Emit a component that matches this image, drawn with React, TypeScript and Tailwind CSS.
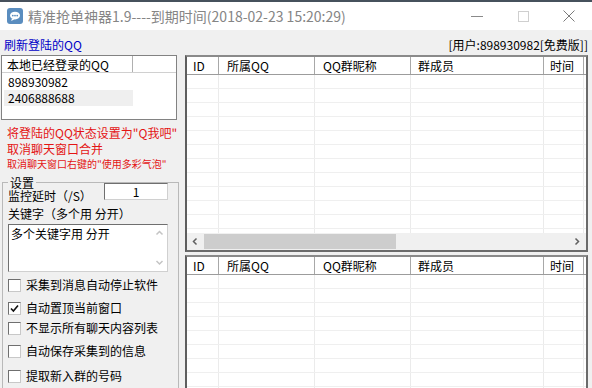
const cols = [
  { label: 'ID', w: 'w-[32px]', pl: 'pl-[6px]' },
  { label: '所属QQ', w: 'w-[96px]', pl: 'pl-[8px]' },
  { label: 'QQ群昵称', w: 'w-[96px]', pl: 'pl-[8px]' },
  { label: '群成员', w: 'w-[133px]', pl: 'pl-[7px]' },
  { label: '时间', w: 'w-[40px]', pl: 'pl-[6px]' },
];

function AppIcon() {
  return (
    <svg width="16" height="16" viewBox="0 0 16 16">
      <rect x="0" y="0" width="16" height="16" rx="3" fill="#5a8dbf" />
      <ellipse cx="8" cy="7.6" rx="5" ry="3.9" fill="#fff" />
      <path d="M5 10.5 L4.2 13 L7.5 11.2 Z" fill="#fff" />
      <circle cx="5.8" cy="7.6" r="0.9" fill="#5a8dbf" />
      <circle cx="8" cy="7.6" r="0.9" fill="#5a8dbf" />
      <circle cx="10.2" cy="7.6" r="0.9" fill="#5a8dbf" />
    </svg>
  );
}

function WindowControls() {
  return (
    <div className="ml-auto flex items-center h-full">
      <div className="w-[46px] flex justify-center">
        <svg width="12" height="12" viewBox="0 0 12 12">
          <line x1="0" y1="6.5" x2="12" y2="6.5" stroke="#8a8a8a" strokeWidth="1" />
        </svg>
      </div>
      <div className="w-[46px] flex justify-center">
        <svg width="11" height="11" viewBox="0 0 11 11">
          <rect x="0.5" y="0.5" width="10" height="10" fill="none" stroke="#cfcfcf" strokeWidth="1" />
        </svg>
      </div>
      <div className="w-[46px] flex justify-center">
        <svg width="12" height="12" viewBox="0 0 12 12">
          <path d="M0.5 0.5 L11.5 11.5 M11.5 0.5 L0.5 11.5" stroke="#7a7a7a" strokeWidth="1" />
        </svg>
      </div>
    </div>
  );
}

function Checkbox({ checked, label, mt }: { checked?: boolean; label: string; mt: string }) {
  return (
    <div className={`flex items-center h-[16px] ${mt}`}>
      <div className="w-[13px] h-[13px] bg-white border border-[#6f6f6f] border-r-[#c8c8c8] border-b-[#c8c8c8] flex items-center justify-center">
        {checked && (
          <svg width="9" height="9" viewBox="0 0 9 9">
            <path d="M1 4.5 L3.4 7 L8 1.5" fill="none" stroke="#111" strokeWidth="1.6" />
          </svg>
        )}
      </div>
      <span className="ml-[5px] leading-[16px]">{label}</span>
    </div>
  );
}

function Chevron({ dir, color = '#606060' }: { dir: 'l' | 'r' | 'u' | 'd'; color?: string }) {
  const d = {
    l: 'M5.5 1.5 L2.5 4.5 L5.5 7.5',
    r: 'M2.5 1.5 L5.5 4.5 L2.5 7.5',
    u: 'M1.5 5.5 L4.5 2.5 L7.5 5.5',
    d: 'M1.5 3 L4.5 6 L7.5 3',
  }[dir];
  return (
    <svg width="9" height="9" viewBox="0 0 9 9">
      <path d={d} fill="none" stroke={color} strokeWidth="1.5" />
    </svg>
  );
}

function GridTable({ rows, scroll, height }: { rows: number; scroll?: boolean; height: string }) {
  return (
    <div className={`w-[403px] ${height} shrink-0 border-2 border-[#6b6b6b] border-t-[#8a8a8a] border-l-[#5e5e5e] bg-white flex flex-col overflow-hidden`}>
      {/* header */}
      <div className="flex h-[18px] shrink-0 border-b border-[#9c9c9c]">
        {cols.map((c) => (
          <div key={c.label} className={`${c.w} ${c.pl} h-full border-r border-[#a8a8a8] leading-[17px] whitespace-nowrap`}>
            {c.label}
          </div>
        ))}
      </div>
      {/* body */}
      <div className="flex-1 overflow-hidden">
        {[...Array(rows)].map((_, i) => (
          <div key={i} className="flex h-[14px] border-b border-[#efefef]">
            {cols.map((c) => (
              <div key={c.label} className={`${c.w} h-full border-r border-[#ebebeb]`} />
            ))}
          </div>
        ))}
      </div>
      {scroll && (
        <div className="h-[17px] shrink-0 bg-[#f0f0f0] flex items-center">
          <div className="w-[17px] flex justify-center">
            <Chevron dir="l" />
          </div>
          <div className="flex-1 h-full flex items-center">
            <div className="w-[192px] h-[15px] bg-[#cdcdcd]" />
          </div>
          <div className="w-[17px] flex justify-center">
            <Chevron dir="r" />
          </div>
        </div>
      )}
    </div>
  );
}

export default function App() {
  return (
    <div className="w-[592px] h-[388px] overflow-hidden bg-[#f0f0f0] text-[12px] text-black font-['Noto_Sans_CJK_SC',sans-serif] flex flex-col">
      <div className="h-[2px] bg-[#46515c] shrink-0" />
      {/* title bar */}
      <div className="h-[28px] bg-white flex items-center shrink-0">
        <div className="ml-[7px]">
          <AppIcon />
        </div>
        <span className="ml-[5px] text-[14px] text-[#858585] whitespace-nowrap">
          精准抢单神器1.9----到期时间(2018-02-23 15:20:29)
        </span>
        <WindowControls />
      </div>

      {/* top info row */}
      <div className="h-[25px] pt-[7px] flex justify-between px-[4px] shrink-0">
        <span className="leading-[16px] text-[#0000c8]">刷新登陆的QQ</span>
        <span className="leading-[16px]">[用户:898930982[免费版]]</span>
      </div>

      <div className="flex flex-1 overflow-hidden">
        {/* left panel */}
        <div className="w-[181px] shrink-0 flex flex-col">
          <div className="ml-[1px] w-[176px] h-[65px] shrink-0 bg-white border border-[#828282]">
            <div className="flex h-[17px] border-b border-[#d0d0d0]">
              <div className="w-[131px] border-r border-[#b0b0b0] pl-[5px] leading-[17px]">本地已经登录的QQ</div>
            </div>
            <div className="pl-[2px] pt-[1px]">
              <div className="h-[16px] leading-[16px] pl-[4px] w-[129px]">898930982</div>
              <div className="h-[16px] leading-[16px] pl-[4px] w-[129px] bg-[#efefef]">2406888688</div>
            </div>
          </div>

          <div className="mt-[4px] pl-[7px] text-[#e41414] shrink-0">
            <div className="h-[17px] leading-[17px] whitespace-nowrap">将登陆的QQ状态设置为"Q我吧"</div>
            <div className="h-[16px] leading-[16px]">取消聊天窗口合并</div>
            <div className="h-[13px] leading-[13px] text-[10px] whitespace-nowrap">取消聊天窗口右键的"使用多彩气泡"</div>
          </div>

          <fieldset className="mt-[6px] ml-[2px] w-[177px] h-[230px] shrink-0 border border-[#b9b9b9] pl-[5px] pr-[10px]">
            <legend className="px-[2px] leading-[13px]">设置</legend>
            <div className="flex items-start -mt-[6px]">
              <span className="mt-[6px] leading-[13px]">监控延时（/S）</span>
              <div className="ml-auto w-[64px] h-[17px] bg-white border border-[#6f6f6f] border-r-[#d0d0d0] border-b-[#d0d0d0] text-center leading-[15px]">
                1
              </div>
            </div>
            <div className="mt-[4px] leading-[16px]">关键字（多个用 分开）</div>
            <div className="mt-[2px] h-[48px] w-[160px] bg-white border border-[#6f6f6f] border-r-[#d0d0d0] border-b-[#d0d0d0] flex">
              <div className="flex-1 pl-[2px] pt-[1px] leading-[16px]">多个关键字用 分开</div>
              <div className="w-[16px] flex flex-col justify-between items-center py-[4px]">
                <Chevron dir="u" color="#c4c4c4" />
                <Chevron dir="d" color="#c4c4c4" />
              </div>
            </div>
            <Checkbox mt="mt-[5px]" label="采集到消息自动停止软件" />
            <Checkbox mt="mt-[7px]" label="自动置顶当前窗口" checked />
            <Checkbox mt="mt-[4px]" label="不显示所有聊天内容列表" />
            <Checkbox mt="mt-[7px]" label="自动保存采集到的信息" />
            <Checkbox mt="mt-[9px]" label="提取新入群的号码" />
          </fieldset>
        </div>

        {/* right panel */}
        <div className="ml-[4px] flex flex-col">
          <GridTable rows={12} scroll height="h-[197px]" />
          <div className="mt-[3px] shrink-0">
            <GridTable rows={10} height="h-[150px]" />
          </div>
        </div>
      </div>
    </div>
  );
}
